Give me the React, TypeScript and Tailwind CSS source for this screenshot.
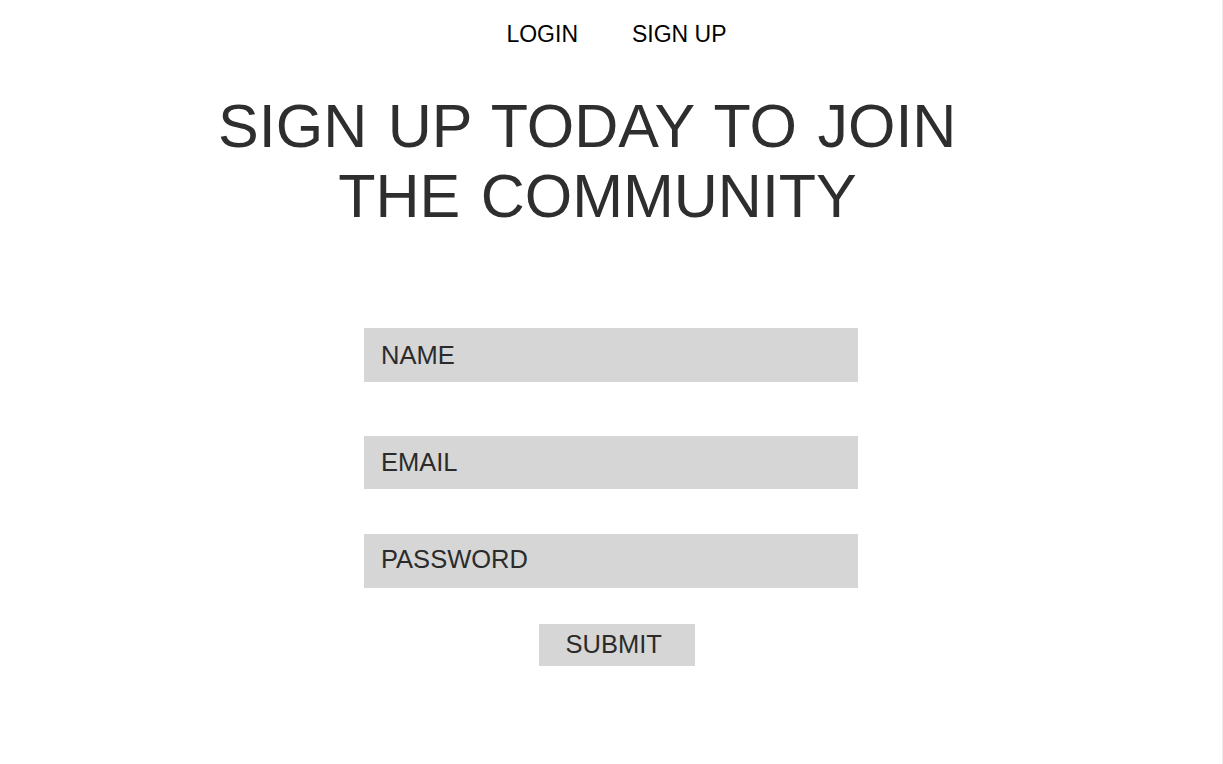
export default function App() {
  const fields = [
    { label: "NAME", cls: "mt-[97px] h-[54px]" },
    { label: "EMAIL", cls: "mt-[54px] h-[53px]" },
    { label: "PASSWORD", cls: "mt-[45px] h-[54px] pb-[3px]" },
  ]

  return (
    <div className="min-h-screen bg-white border-r border-[#efefef] font-['Liberation_Sans',Arial,sans-serif]">
      <nav className="flex justify-center gap-[54px] pt-[21px] pl-[11px] text-[23px] leading-[26px] text-black">
        <a href="#login">LOGIN</a>
        <a href="#signup">SIGN UP</a>
      </nav>

      <h1 className="mt-[44px] pr-[27px] text-center text-[61px] leading-[70px] text-[#2e2e2e] [word-spacing:3.5px]">
        <span className="block">SIGN UP TODAY TO JOIN{"\u00a0"}</span>
        <span className="block">THE COMMUNITY</span>
      </h1>

      <form className="flex flex-col items-center text-[25.5px] text-[#2b2b2b]">
        {fields.map((f) => (
          <div key={f.label} className={`${f.cls} w-[494px] bg-[#d6d6d6] flex items-center pl-[17px]`}>
            {f.label}
          </div>
        ))}
        <button
          type="button"
          className="mt-[36px] ml-[11px] h-[42px] w-[156px] bg-[#d6d6d6] pl-[27px] text-left leading-none"
        >
          SUBMIT
        </button>
      </form>
    </div>
  )
}
